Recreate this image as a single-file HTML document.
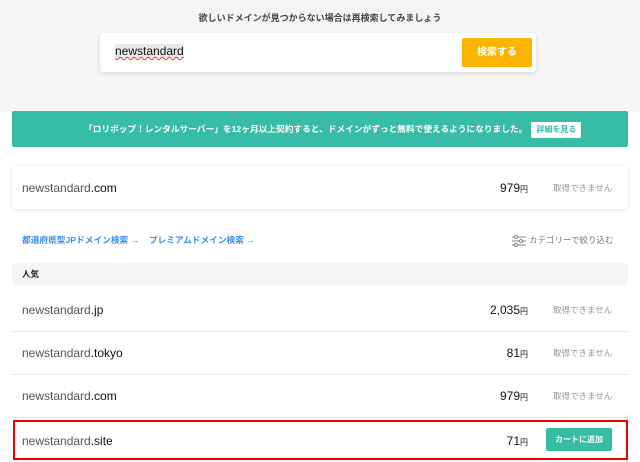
<!DOCTYPE html>
<html><head><meta charset="utf-8"><style>
*{margin:0;padding:0;box-sizing:border-box}
body{width:640px;height:462px;overflow:hidden;background:#fff;font-family:"Liberation Sans","Noto Sans CJK JP",sans-serif;color:#222;position:relative}
.top{position:absolute;left:0;top:0;width:640px;height:112px;background:#f5f5f5}
.ttl{position:absolute;top:11px;width:640px;text-align:center;font-size:9px;color:#444;font-weight:bold}
.sbox{position:absolute;left:100px;top:33px;width:436px;height:39px;background:#fff;border-radius:3px;box-shadow:0 2px 5px rgba(0,0,0,.12)}
.sbox .q{position:absolute;left:15px;top:11px;font-size:12px;color:#111;background:#e8e8e8;text-decoration:underline wavy #e33;text-decoration-thickness:1px}
.sbtn{position:absolute;left:362px;top:5px;width:70px;height:29px;background:#f9b500;border-radius:2px;color:#fff;font-size:10px;font-weight:bold;text-align:center;line-height:29px}
.ban{position:absolute;left:12px;top:111px;width:616px;height:36px;background:#37bda6;border-radius:2px;color:#fff;font-size:8.7px;font-weight:bold;line-height:36px;padding-left:72px;white-space:nowrap}
.ban span{display:inline-block;background:#fff;color:#37bda6;border-radius:2px;line-height:16px;padding:0 5px;margin-left:4px;font-size:8px}
.card{position:absolute;left:12px;top:166px;width:616px;height:43px;background:#fff;border-radius:3px;box-shadow:0 1px 4px rgba(0,0,0,.12)}
.row{position:absolute;left:12px;width:616px;height:43px;border-bottom:1px solid #e8e8e8}
.d{position:absolute;left:10px;top:50%;transform:translateY(-50%);font-size:12px;color:#555}
.d b{color:#111;font-weight:normal}
.p{position:absolute;right:100px;top:50%;transform:translateY(-50%);font-size:12px;color:#111}
.p small{font-size:8px}
.s{position:absolute;left:541px;top:50%;transform:translateY(-50%);font-size:8.5px;color:#999}
.links{position:absolute;left:22px;top:233px;font-size:8.7px;color:#3b8ef0;font-weight:bold}
.flt{position:absolute;left:512px;top:234px;font-size:8.5px;color:#777}
.hd{position:absolute;left:12px;top:263px;width:616px;height:22px;background:#f5f5f5;font-size:8.5px;padding-left:10px;line-height:22px;font-weight:bold}
.red{position:absolute;left:13px;top:420px;width:615px;height:40px;border:2px solid #e80000}
.cart{position:absolute;left:534px;top:9px;width:66px;height:23px;background:#37bda6;border-radius:2px;color:#fff;font-size:8px;font-weight:bold;text-align:center;line-height:23px}
</style></head><body>
<div class="top"><div class="ttl">欲しいドメインが見つからない場合は再検索してみましょう</div>
<div class="sbox"><span class="q">newstandard</span><div class="sbtn">検索する</div></div></div>
<div class="ban">「ロリポップ！レンタルサーバー」を12ヶ月以上契約すると、ドメインがずっと無料で使えるようになりました。<span>詳細を見る</span></div>
<div class="card"><div class="d">newstandard<b>.com</b></div><div class="p">979<small>円</small></div><div class="s">取得できません</div></div>
<div class="links">都道府県型JPドメイン検索 →&nbsp;&nbsp;&nbsp;&nbsp;プレミアムドメイン検索 →</div>
<div class="flt"><svg width="14" height="12" viewBox="0 0 14 12" style="vertical-align:middle;margin-right:3px" fill="none" stroke="#888" stroke-width="1"><path d="M0 2h14M0 6h14M0 10h14"/><circle cx="4" cy="2" r="1.5" fill="#fff"/><circle cx="9" cy="6" r="1.5" fill="#fff"/><circle cx="4" cy="10" r="1.5" fill="#fff"/></svg>カテゴリーで絞り込む</div>
<div class="hd">人気</div>
<div class="row" style="top:289px"><div class="d">newstandard<b>.jp</b></div><div class="p">2,035<small>円</small></div><div class="s">取得できません</div></div>
<div class="row" style="top:332px"><div class="d">newstandard<b>.tokyo</b></div><div class="p">81<small>円</small></div><div class="s">取得できません</div></div>
<div class="row" style="top:375px"><div class="d">newstandard<b>.com</b></div><div class="p">979<small>円</small></div><div class="s">取得できません</div></div>
<div class="row" style="top:419px;border:none"><div class="d">newstandard<b>.site</b></div><div class="p">71<small>円</small></div><div class="cart">カートに追加</div></div>
<div class="red"></div>
</body></html>
